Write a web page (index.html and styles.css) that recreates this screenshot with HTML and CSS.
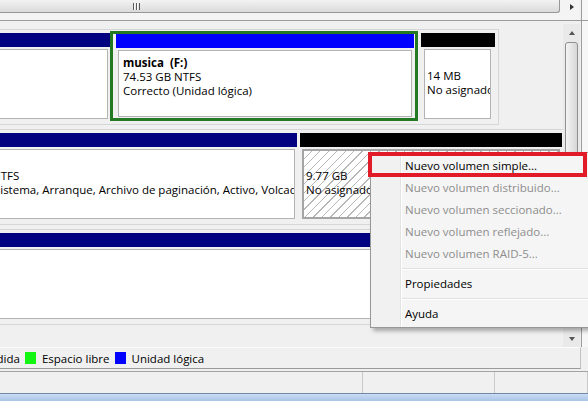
FILE: index.html
```html
<!DOCTYPE html>
<html lang="es">
<head>
    <meta charset="UTF-8">
    <meta name="viewport" content="width=device-width, initial-scale=1.0">
    <title>Administración de discos</title>
    <link rel="stylesheet" href="styles.css">
</head>
<body>
    <div class="console">
        <!-- bottom of the volume list, only its scrollbar shows -->
        <div class="list-pane">
            <div class="hscroll">
                <div class="hthumb"><span class="grip"></span></div>
                <div class="hbtn"><span class="arrow arrow-right"></span></div>
            </div>
            <div class="edge"></div>
        </div>

        <!-- graphical view of the disks -->
        <div class="graph-pane">
            <div class="graph">
                <div class="graph-track">
                    <div class="disk-row">
                        <div class="part" style="width:175px">
                            <div class="part-bar primary"></div>
                            <div class="part-body"></div>
                        </div>
                        <div class="extended" style="width:308px">
                            <div class="part">
                                <div class="part-bar logical"></div>
                                <div class="part-body">
                                    <b>musica&nbsp; (F:)</b>
                                    <span>74.53 GB NTFS</span>
                                    <span>Correcto (Unidad lógica)</span>
                                </div>
                            </div>
                        </div>
                        <div class="part small" style="width:74px">
                            <div class="part-bar unallocated"></div>
                            <div class="part-body">
                                <b>&nbsp;</b>
                                <span>14 MB</span>
                                <span>No asignado</span>
                            </div>
                        </div>
                    </div>

                    <div class="disk-row">
                        <div class="part" style="width:362px">
                            <div class="part-bar primary"></div>
                            <div class="part-body">
                                <b>(C:)</b>
                                <span>68.36 GB NTFS</span>
                                <span>Correcto (Sistema, Arranque, Archivo de paginación, Activo, Volcado, Partición primaria)</span>
                            </div>
                        </div>
                        <div class="part" style="width:262px">
                            <div class="part-bar unallocated"></div>
                            <div class="part-body hatched">
                                <b>&nbsp;</b>
                                <span>9.77 GB</span>
                                <span>No asignado</span>
                            </div>
                        </div>
                    </div>

                    <div class="disk-row">
                        <div class="part" style="width:627px">
                            <div class="part-bar primary"></div>
                            <div class="part-body"></div>
                        </div>
                    </div>
                </div>
            </div>
            <div class="vscroll">
                <div class="vbtn"><span class="arrow arrow-up"></span></div>
                <div class="vthumb"></div>
                <div class="vbtn"><span class="arrow arrow-down"></span></div>
            </div>
            <div class="edge"></div>
        </div>

        <div class="legend">
            <div class="legend-track">
                <span class="key"><i class="swatch sw-unallocated"></i>No asignado</span>
                <span class="key"><i class="swatch sw-primary"></i>Partición primaria</span>
                <span class="key"><i class="swatch sw-extended"></i>Partición extendida</span>
                <span class="key"><i class="swatch sw-free"></i>Espacio libre</span>
                <span class="key"><i class="swatch sw-logical"></i>Unidad lógica</span>
            </div>
        </div>

        <div class="statusbar">
            <div class="status-cell wide"></div>
            <div class="status-cell mid"></div>
            <div class="status-cell"></div>
        </div>

        <div class="frame-bottom"></div>

        <!-- context menu for the unallocated space -->
        <ul class="context-menu">
            <li class="menu-item">Nuevo volumen simple...</li>
            <li class="menu-item disabled">Nuevo volumen distribuido...</li>
            <li class="menu-item disabled">Nuevo volumen seccionado...</li>
            <li class="menu-item disabled">Nuevo volumen reflejado...</li>
            <li class="menu-item disabled">Nuevo volumen RAID-5...</li>
            <li class="menu-sep"></li>
            <li class="menu-item">Propiedades</li>
            <li class="menu-sep"></li>
            <li class="menu-item">Ayuda</li>
        </ul>
        <div class="callout"></div>
    </div>
</body>
</html>
```

FILE: styles.css
```css
:root {
    --bg: #f0f0f0;
    --navy: #000080;
    --blue: #0000ff;
    --green: #237a23;
}

* {
    margin: 0;
    padding: 0;
    box-sizing: border-box;
}

body {
    width: 588px;
    height: 401px;
    overflow: hidden;
    background: var(--bg);
    font-family: 'Segoe UI', 'Open Sans', sans-serif;
    font-size: 11.5px;
    color: #000;
}

.console {
    position: relative;
    height: 100%;
    display: flex;
    flex-direction: column;
}

/* right window edge */
.edge {
    width: 8px;
    background: linear-gradient(90deg, var(--bg) 1px, #9c9c9c 1px 2px, #f7f7f7 2px);
}

/* volume list scrollbar */
.list-pane {
    height: 21px;
    display: flex;
    border-bottom: 1px solid #9b9b9b;
    background: #f4f4f4;
}

.hscroll {
    flex: 1;
    height: 13px;
    display: flex;
    gap: 3px;
}

.hthumb {
    flex: 1;
    margin-left: -288px;
    display: flex;
    justify-content: center;
    align-items: center;
    border: 1px solid #979797;
    border-top: 0;
    border-radius: 0 0 3px 3px;
    background: linear-gradient(#f3f3f3, #dadada);
}

.grip {
    width: 7px;
    height: 7px;
    background: repeating-linear-gradient(90deg, #5a5a5a 0 1px, #fafafa 1px 2px, transparent 2px 3px);
}

.hbtn {
    width: 17px;
    display: flex;
    align-items: center;
    justify-content: center;
}

.arrow {
    width: 0;
    height: 0;
    border: 0 solid transparent;
}

.arrow-right {
    border-width: 3.5px 0 3.5px 4px;
    border-left-color: #333;
}

.arrow-up {
    border-width: 0 3.5px 4px;
    border-bottom-color: #555;
}

.arrow-down {
    border-width: 4px 3.5px 0;
    border-top-color: #555;
}

/* graphical view */
.graph-pane {
    height: 326px;
    display: flex;
}

.graph {
    flex: 1;
    overflow: hidden;
    padding-top: 8px;
}

.graph-track {
    margin-left: -69px;
}

.disk-row {
    display: flex;
    gap: 3px;
    width: max-content;
    height: 96px;
    padding: 3px 3px 5px;
    margin-bottom: 4px;
    border: 1px solid #d6d6d6;
}

.part {
    display: flex;
    flex-direction: column;
}

.part-bar {
    height: 14px;
    flex-shrink: 0;
}

.primary { background: var(--navy); }
.logical { background: var(--blue); }
.unallocated { background: #000; }

.part-body {
    flex: 1;
    margin: 2px 2px 0;
    padding: 5px 3px 0;
    background: #fff;
    border: 1px solid #b3b3b3;
    overflow: hidden;
    white-space: nowrap;
    line-height: 14px;
}

.small .part-body {
    margin: 2px 4px 0 3px;
    padding-left: 2px;
}

.part-body b,
.part-body span {
    display: block;
}

.hatched {
    border: 2px solid #a5a5a5;
    padding: 4px 2px 0;
    background: repeating-linear-gradient(135deg, #fff 0 5px, #b8b8b8 5px 6px);
}

.extended {
    display: flex;
    margin: -2px 0 -2px -3px;
    padding: 0 1px 1px 3px;
    border: 3px solid var(--green);
}

.extended .part {
    flex: 1;
}

.extended .part-body {
    padding-left: 4px;
}

/* vertical scrollbar of the graphical view */
.vscroll {
    width: 17px;
    margin-top: 3px;
    display: flex;
    flex-direction: column;
    background: #e9e9e9;
}

.vbtn {
    height: 17px;
    display: flex;
    align-items: center;
    justify-content: center;
}

.vthumb {
    flex: 1;
    margin: 1px 2px 30px;
    border: 1px solid #8f8f8f;
    border-radius: 3px;
    background: linear-gradient(90deg, #f4f4f4, #d6d6d6);
}

/* legend */
.legend {
    height: 22px;
    margin-right: 7px;
    overflow: hidden;
    border-top: 1px solid #fbfbfb;
    border-right: 1px solid #c2c2c2;
    border-bottom: 1px solid #9a9a9a;
}

.legend-track {
    display: flex;
    align-items: center;
    gap: 5px;
    height: 100%;
    margin-left: -308px;
    white-space: nowrap;
}

.key {
    display: flex;
    align-items: center;
    gap: 6px;
}

.swatch {
    width: 11px;
    height: 12px;
}

.sw-unallocated { background: #000; }
.sw-primary { background: var(--navy); }
.sw-extended { background: #008000; }
.sw-free { background: #13f513; }
.sw-logical { background: var(--blue); }

/* status bar */
.statusbar {
    height: 22px;
    margin-top: 2px;
    display: flex;
    border-top: 1px solid #a3a3a3;
}

.status-cell {
    flex: 1;
    border-right: 1px solid #c9c9c9;
}

.status-cell.wide { flex: 0 0 363px; }
.status-cell.mid { flex: 0 0 132px; }

.frame-bottom {
    height: 8px;
    border-top: 1px solid #7189a6;
    background: linear-gradient(#c9ddf3, #a9c5e6);
}

/* context menu */
.context-menu {
    position: absolute;
    left: 370px;
    top: 152px;
    width: 240px;
    padding: 2px;
    list-style: none;
    background: linear-gradient(90deg, #f1f1f1 29px, #e2e3e3 29px 30px, #fff 30px 31px, #f5f5f5 31px);
    border: 1px solid #979797;
    box-shadow: 3px 3px 4px rgba(0, 0, 0, 0.3);
}

.menu-item {
    height: 22px;
    line-height: 22px;
    padding-left: 32px;
    white-space: nowrap;
}

.menu-item.disabled {
    color: #8d8d8d;
}

.menu-sep {
    height: 8px;
    margin-left: 29px;
    background: linear-gradient(transparent 3px, #e0e0e0 3px 4px, #fff 4px 5px, transparent 5px);
}

.callout {
    position: absolute;
    left: 368px;
    top: 152px;
    width: 219px;
    height: 25px;
    border: 4px solid #e11b27;
}
```
